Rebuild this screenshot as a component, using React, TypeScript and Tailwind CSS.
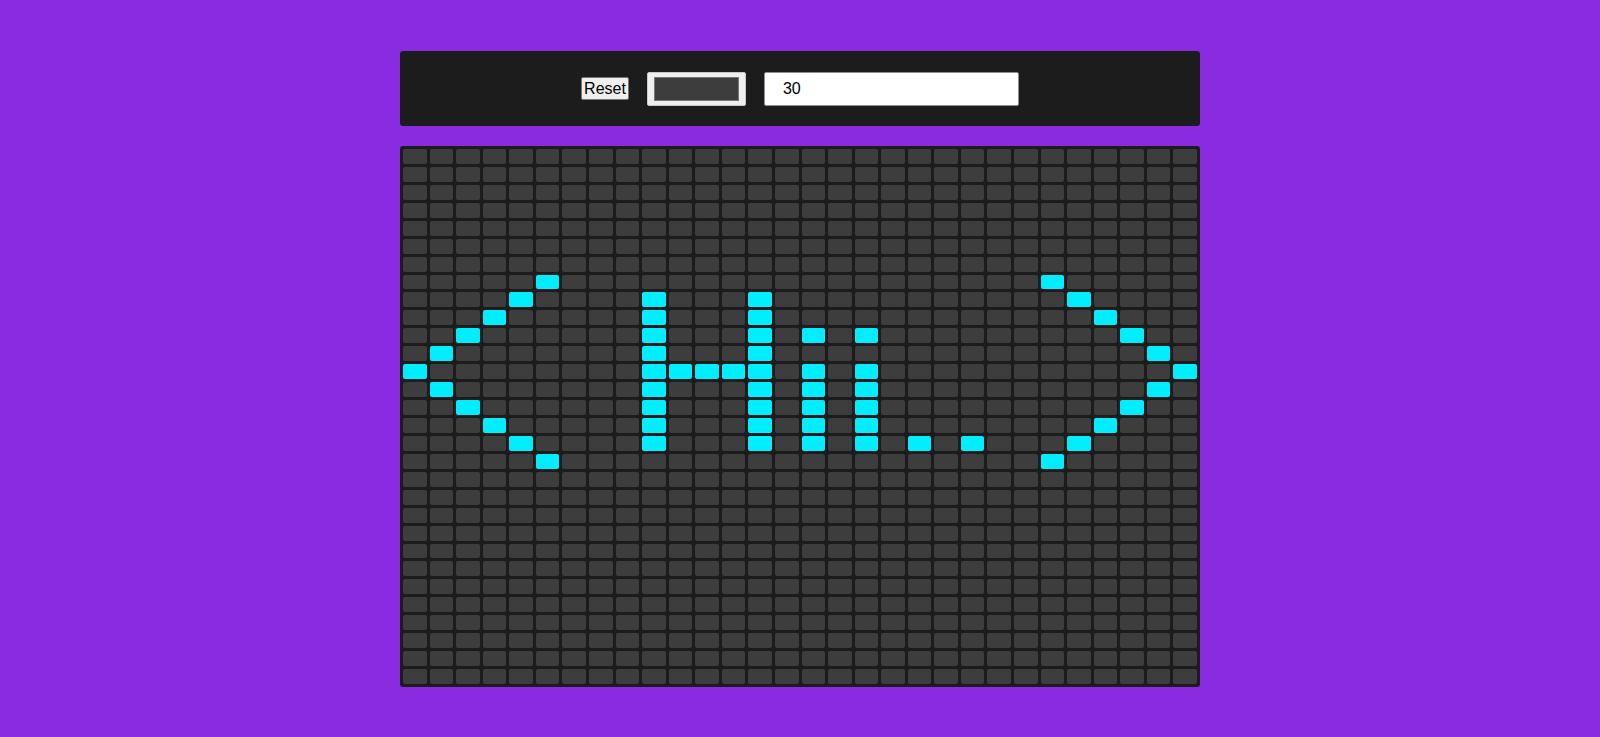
import React, { useState } from 'react';

const SIZE = 30;

// lit cells of the "<Hii..>" pattern, as [col, row]
const litCells: [number, number][] = [
  // left chevron
  [5, 7], [4, 8], [3, 9], [2, 10], [1, 11], [0, 12], [1, 13], [2, 14], [3, 15], [4, 16], [5, 17],
  // H
  ...[8, 9, 10, 11, 12, 13, 14, 15, 16].map((r) => [9, r] as [number, number]),
  ...[8, 9, 10, 11, 12, 13, 14, 15, 16].map((r) => [13, r] as [number, number]),
  [10, 12], [11, 12], [12, 12],
  // i i
  ...[10, 12, 13, 14, 15, 16].map((r) => [15, r] as [number, number]),
  ...[10, 12, 13, 14, 15, 16].map((r) => [17, r] as [number, number]),
  // dots
  [19, 16], [21, 16],
  // right chevron
  [24, 7], [25, 8], [26, 9], [27, 10], [28, 11], [29, 12], [28, 13], [27, 14], [26, 15], [25, 16], [24, 17],
];

const lit = new Set(litCells.map(([c, r]) => `${c}-${r}`));

export default function App() {
  const [size, setSize] = useState('30');

  return (
    <div className="min-h-screen bg-[#8a2be2] pt-[51px] pb-10 font-['Liberation_Sans',Arial,sans-serif]">
      <div className="w-[800px] mx-auto">
        <div className="h-[75px] bg-[#1c1c1c] rounded-[3px] flex items-center justify-center gap-[18px]">
          <button className="h-[23px] px-[2px] bg-[#efefef] border border-[#767676] rounded-[2px] text-[16px] leading-none text-black">
            Reset
          </button>
          <div className="w-[99px] h-[34px] bg-[#efefef] border border-[#c8c8c8] rounded-[2px] px-[6px] py-[4px]">
            <div className="w-full h-full bg-[#3d3d3d] border border-[#777777]"></div>
          </div>
          <input
            value={size}
            onChange={(e) => setSize(e.target.value)}
            className="w-[255px] h-[34px] bg-white border border-[#8f8f8f] rounded-[2px] pl-[18px] text-[16px] text-black outline-none"
          />
        </div>

        <div className="mt-[20px] h-[541px] bg-[#1c1c1c] rounded-[3px] p-[3px] grid grid-cols-[repeat(30,minmax(0,1fr))] grid-rows-[repeat(30,minmax(0,1fr))] gap-[3px]">
          {Array.from({ length: SIZE * SIZE }).map((_, i) => {
            const r = Math.floor(i / SIZE);
            const c = i % SIZE;
            const on = lit.has(`${c}-${r}`);
            return (
              <div
                key={i}
                className={on ? 'rounded-[2px] bg-[#00eeff]' : 'rounded-[2px] bg-[#3d3d3d]'}
              />
            );
          })}
        </div>
      </div>
    </div>
  );
}
